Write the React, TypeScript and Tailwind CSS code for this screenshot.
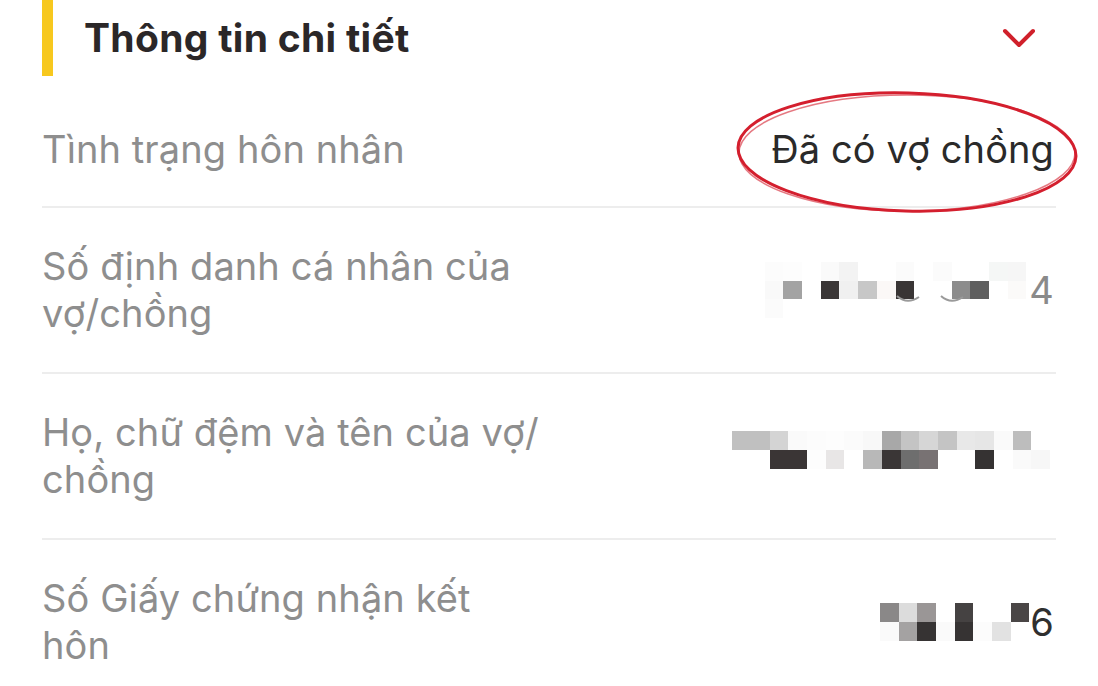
import React from 'react';

const W = '#ffffff';

// pixelated blocks that hide personal data
const mosaicSpouseId: string[][] = [
  ['#fcfcfc', '#fdfdfd', W, '#fafafa', '#f3f3f3', W, W, '#fbfbfb', W, '#fbfbfb', W, W, '#f5f7f6', '#f6f6f6'],
  ['#f9f9f9', '#a3a3a3', W, '#3a3636', '#f0f0f0', '#c7c7c7', '#fbf8f7', '#393535', W, W, '#8c8c8c', '#5f5f5f', W, '#fbfaf9'],
  ['#fbfbfb', W, W, W, W, W, W, W, W, W, W, W, W, W],
];

const mosaicSpouseName: string[][] = [
  ['#c0c0c0', '#c0c0c0', '#d4d4d4', '#fafafa', '#fcfcfc', '#fdfdfd', '#fbfbfb', '#f8f8f8', '#a8a8a8', '#c4c4c4', '#d6d6d6', '#c4c4c4', '#e8e8e8', '#e6e6e6', '#fafafa', '#bdbdbd', W],
  [W, W, '#3a3535', '#3a3535', '#fdfdfd', '#e8e6e6', W, '#b8b8b8', '#3a3636', '#6e6e6e', '#787273', W, W, '#353232', W, '#fafafa', '#f7f7f7'],
];

const mosaicCertificate: string[][] = [
  ['#8a8888', '#dcdcdc', '#9a9696', W, '#454242', W, W, '#4a4646'],
  ['#fafafa', '#a4a2a2', '#363333', '#fafafa', '#363333', '#fcfcfc', '#e2e2e2', W],
];

const Mosaic: React.FC<{ rows: string[][] }> = ({ rows }) => (
  <div className="flex flex-col">
    {rows.map((row, i) => (
      <div key={i} className="flex">
        {row.map((c, j) => (
          <div key={j} className="w-[18.7px] h-[18.6px]" style={{ backgroundColor: c }} />
        ))}
      </div>
    ))}
  </div>
);

const Divider = () => <div className="h-[2px] bg-[#ededed]" />;

const App: React.FC = () => {
  return (
    <div
      className="relative w-[1098px] h-[686px] overflow-hidden bg-white"
      style={{ fontFamily: 'Inter, "Noto Sans", sans-serif' }}
    >
      {/* Header */}
      <header className="flex items-center h-[76px] pl-[42px] pr-[60px] mb-[16px]">
        <div className="w-[11px] h-full bg-[#f7c81e]" />
        <h2 className="ml-[31px] text-[39px] font-bold text-[#2b2728] tracking-[0.3px]">Thông tin chi tiết</h2>
        <svg className="ml-auto w-[36px] h-[24px]" viewBox="0 0 36 24" fill="none">
          <polyline points="3,5 17,19 31,5" stroke="#d0202b" strokeWidth="4" strokeLinecap="round" strokeLinejoin="round" />
        </svg>
      </header>

      <div className="px-[42px] text-[38px] leading-[47px] tracking-[0.1px]">
        {/* Marital status */}
        <div className="flex items-center justify-between pt-[34px] pb-[33px]">
          <span className="text-[#8e8e8e]">Tình trạng hôn nhân</span>
          <span className="text-[#2a2a2a] mr-[2px]">Đã có vợ chồng</span>
        </div>
        <Divider />

        {/* Spouse ID */}
        <div className="flex items-center justify-between py-[35px]">
          <span className="text-[#8e8e8e]">
            Số định danh cá nhân của
            <br />
            vợ/chồng
          </span>
          <div className="flex items-center mr-[2px]">
            <div className="relative">
              <Mosaic rows={mosaicSpouseId} />
              <svg className="absolute left-[130px] top-[33px] w-[80px] h-[10px]" viewBox="0 0 80 10" fill="none">
                <path d="M2 1 Q 12 10 24 2" stroke="#9a9a9a" strokeWidth="2" />
                <path d="M46 1 Q 56 10 68 2" stroke="#9a9a9a" strokeWidth="2" />
              </svg>
            </div>
            <span className="ml-[3px] text-[#8a8a8a]">4</span>
          </div>
        </div>
        <Divider />

        {/* Spouse name */}
        <div className="flex items-center justify-between py-[35px]">
          <span className="text-[#8e8e8e]">
            Họ, chữ đệm và tên của vợ/
            <br />
            chồng
          </span>
          <div className="mr-[6px] -mt-[12px]">
            <Mosaic rows={mosaicSpouseName} />
          </div>
        </div>
        <Divider />

        {/* Marriage certificate */}
        <div className="flex items-center justify-between py-[35px]">
          <span className="text-[#8e8e8e]">
            Số Giấy chứng nhận kết
            <br />
            hôn
          </span>
          <div className="flex items-center mr-[2px]">
            <Mosaic rows={mosaicCertificate} />
            <span className="ml-[1px] text-[#2f2f2f]">6</span>
          </div>
        </div>
      </div>

      {/* Hand-drawn red circle */}
      <svg className="absolute left-0 top-0 w-[1098px] h-[686px] pointer-events-none" viewBox="0 0 1098 686" fill="none">
        <ellipse cx="907" cy="152" rx="169" ry="59" stroke="#d41f2e" strokeWidth="3" transform="rotate(1.5 907 152)" />
        <ellipse cx="907" cy="153" rx="168" ry="58" stroke="#d41f2e" strokeWidth="1.5" opacity="0.6" />
      </svg>
    </div>
  );
};

export default App;
